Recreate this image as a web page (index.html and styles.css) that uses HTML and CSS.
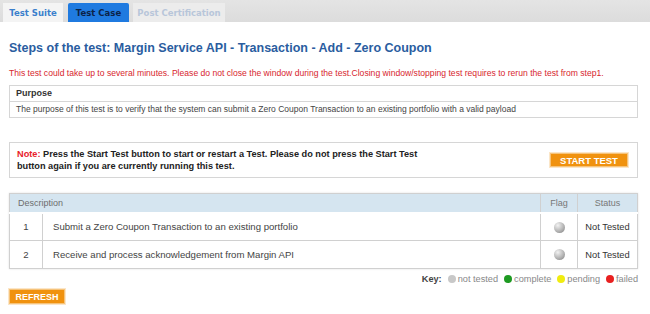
FILE: index.html
```html
<!DOCTYPE html>
<html>
<head>
<meta charset="utf-8">
<link rel="stylesheet" href="styles.css">
</head>
<body>
<div class="tabbar">
  <div class="tab tab-suite">Test Suite</div>
  <div class="tab tab-case">Test Case</div>
  <div class="tab tab-post">Post Certification</div>
</div>
<div class="content">
  <h1 class="title">Steps of the test: Margin Service API - Transaction - Add - Zero Coupon</h1>
  <p class="warning">This test could take up to several minutes. Please do not close the window during the test.Closing window/stopping test requires to rerun the test from step1.</p>
  <div class="purpose">
    <div class="purpose-head">Purpose</div>
    <div class="purpose-body">The purpose of this test is to verify that the system can submit a Zero Coupon Transaction to an existing portfolio with a valid payload</div>
  </div>
  <div class="note">
    <p class="note-text"><span class="note-label">Note:</span> Press the Start Test button to start or restart a Test. Please do not press the Start Test button again if you are currently running this test.</p>
    <div class="btn btn-start">START TEST</div>
  </div>
  <table class="steps">
    <thead>
      <tr>
        <th class="col-desc" colspan="2">Description</th>
        <th class="col-flag">Flag</th>
        <th class="col-status">Status</th>
      </tr>
    </thead>
    <tbody>
      <tr>
        <td class="col-num">1</td>
        <td class="col-text">Submit a Zero Coupon Transaction to an existing portfolio</td>
        <td class="col-flag"><span class="ball ball-grey"></span></td>
        <td class="col-status">Not Tested</td>
      </tr>
      <tr>
        <td class="col-num">2</td>
        <td class="col-text">Receive and process acknowledgement from Margin API</td>
        <td class="col-flag"><span class="ball ball-grey"></span></td>
        <td class="col-status">Not Tested</td>
      </tr>
    </tbody>
  </table>
  <div class="key">
    <span class="key-label">Key:</span>
    <span class="key-item"><span class="dot dot-grey"></span>not tested</span>
    <span class="key-item"><span class="dot dot-green"></span>complete</span>
    <span class="key-item"><span class="dot dot-yellow"></span>pending</span>
    <span class="key-item"><span class="dot dot-red"></span>failed</span>
  </div>
  <div class="btn btn-refresh">REFRESH</div>
</div>
</body>
</html>
```

FILE: styles.css
```css
* { box-sizing: border-box; }
html, body { margin: 0; padding: 0; background: #fff; }
body {
  font-family: "Liberation Sans", Arial, sans-serif;
  font-size: 9px;
  color: #333;
  width: 650px;
  height: 314px;
  overflow: hidden;
}
.tabbar {
  height: 22px;
  background: linear-gradient(#e4e4e4, #dcdcdc);
  display: flex;
  align-items: flex-end;
  padding-left: 3px;
  gap: 5px;
}
.tab {
  height: 19px;
  display: flex;
  align-items: center;
  justify-content: center;
  font-family: "DejaVu Sans", Verdana, sans-serif;
  font-weight: bold;
  font-size: 8.5px;
}
.tab-suite { width: 60px; background: #f4f4f4; color: #3b7fcc; }
.tab-case { width: 61px; background: #1f7ae0; color: #0c2347; border-radius: 2px 2px 0 0; }
.tab-post { width: 92px; background: #ececec; color: #b8c6da; margin-left: -1px; }
.content { padding: 0 12px 0 9px; }
.title {
  margin: 18px 0 0;
  font-size: 12.5px;
  font-weight: bold;
  color: #2a5d9f;
  line-height: 17px;
}
.warning {
  margin: 11px 0 0;
  color: #d7262e;
  font-size: 8.6px;
  line-height: 11px;
}
.purpose {
  margin-top: 6px;
  border: 1px solid #d6d6d6;
}
.purpose-head {
  height: 16px;
  line-height: 15px;
  padding-left: 6px;
  font-weight: bold;
  color: #333;
  border-bottom: 1px solid #d6d6d6;
}
.purpose-body {
  height: 15px;
  line-height: 15px;
  padding-left: 6px;
  color: #444;
  font-size: 8.5px;
}
.note {
  margin-top: 24px;
  height: 36px;
  border: 1px solid #d6d6d6;
  display: flex;
  align-items: center;
  justify-content: space-between;
  padding: 0 9px 0 7px;
}
.note-text {
  margin: 0;
  width: 412px;
  font-weight: bold;
  font-size: 9.2px;
  line-height: 12px;
  color: #222;
}
.note-label { color: #e8202a; }
.btn {
  background: #f0920f;
  color: #fff;
  font-weight: bold;
  font-size: 9px;
  display: flex;
  align-items: center;
  justify-content: center;
  border: 1px solid #f6c37a;
  box-shadow: 0 0 0 1px #fbe6c8;
}
.btn-start { width: 78px; height: 14px; font-size: 9.5px; }
.steps {
  margin-top: 15px;
  width: 629px;
  border-collapse: collapse;
  border: 1px solid #d0d0d0;
  box-shadow: 0 0 2px #e0e0e0;
}
.steps th {
  background: #d5e5f0;
  color: #777;
  font-weight: normal;
  height: 19px;
  padding: 0;
  font-size: 9px;
  border: 1px solid #d0d0d0;
  border-bottom: 2px solid #fff;
}
.steps th.col-desc { text-align: left; padding-left: 8px; color: #6d6d6d; }
.steps td {
  height: 28px;
  padding: 0;
  border: 1px solid #d0d0d0;
  color: #444;
  font-size: 9.6px;
}
.col-num { width: 33px; text-align: center; color: #555; }
.col-text { padding-left: 10px !important; }
.col-flag { width: 37px; text-align: center; }
.col-status { width: 60px; text-align: center; }
td.col-status { color: #333 !important; font-size: 9.3px !important; }
.ball {
  display: inline-block;
  width: 11px;
  height: 11px;
  border-radius: 50%;
  vertical-align: middle;
}
.ball-grey { background: radial-gradient(circle at 35% 30%, #f2f2f2 0%, #b5b5b5 55%, #7c7c7c 100%); }
.key {
  display: flex;
  justify-content: flex-end;
  align-items: center;
  gap: 6px;
  margin-top: 5px;
  height: 10px;
  color: #888;
  font-size: 9.2px;
}
.key-label { font-weight: bold; color: #444; }
.key-item { display: flex; align-items: center; gap: 2px; }
.dot { width: 8px; height: 8px; border-radius: 50%; display: inline-block; }
.dot-grey { background: #c8c8c8; }
.dot-green { background: #1e9a22; }
.dot-yellow { background: #f0ec10; }
.dot-red { background: #e82020; }
.btn-refresh { width: 56px; height: 15px; margin-top: 5px; }
```
